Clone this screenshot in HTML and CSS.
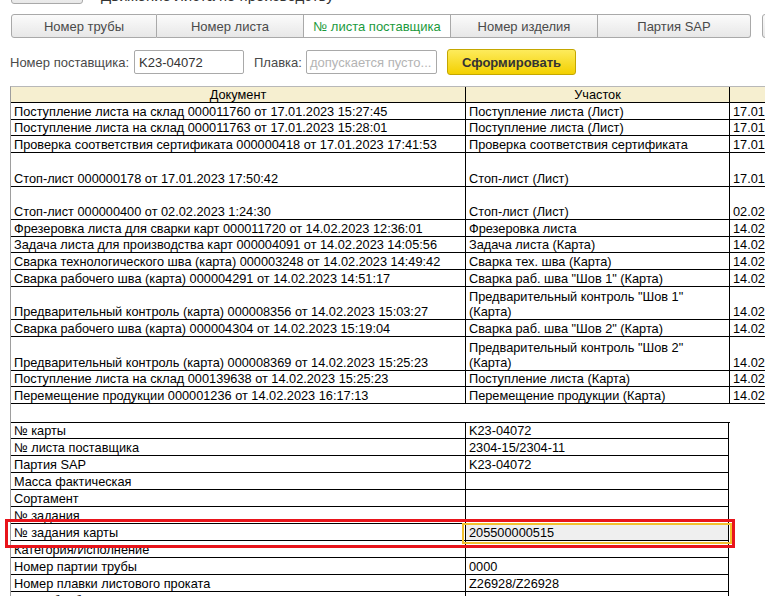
FILE: index.html
```html
<!DOCTYPE html>
<html lang="ru">
<head>
<meta charset="utf-8">
<title>Отчет по карте</title>
<link rel="stylesheet" href="styles.css">
</head>
<body>
<div class="page">
  <div class="topstrip">
    <div class="topstrip-inner">
      <span class="topbtn"></span>
      <span class="toptitle">Движение листа по производству</span>
    </div>
  </div>

  <div class="tabs">
    <div class="tab tab-first">Номер трубы</div>
    <div class="tab">Номер листа</div>
    <div class="tab tab-active">№ листа поставщика</div>
    <div class="tab">Номер изделия</div>
    <div class="tab tab-last">Партия SAP</div>
    <div class="tab tab-extra"></div>
  </div>

  <div class="filters">
    <span class="label label-supplier">Номер поставщика:</span>
    <span class="input input-supplier">K23-04072</span>
    <span class="label label-melt">Плавка:</span>
    <span class="input input-melt placeholder">допускается пусто...</span>
    <span class="btn-primary">Сформировать</span>
  </div>

  <div class="sheet">
    <div class="row head">
      <div class="c c1 center">Документ</div>
      <div class="c c2 center">Участок</div>
      <div class="c c3"></div>
    </div>
    <div class="row"><div class="c c1">Поступление листа на склад 000011760 от 17.01.2023 15:27:45</div><div class="c c2">Поступление листа (Лист)</div><div class="c c3">17.01.2023 15:27:45</div></div>
    <div class="row"><div class="c c1">Поступление листа на склад 000011763 от 17.01.2023 15:28:01</div><div class="c c2">Поступление листа (Лист)</div><div class="c c3">17.01.2023 15:28:01</div></div>
    <div class="row"><div class="c c1">Проверка соответствия сертификата 000000418 от 17.01.2023 17:41:53</div><div class="c c2">Проверка соответствия сертификата</div><div class="c c3">17.01.2023 17:41:53</div></div>
    <div class="row r2"><div class="c c1">Стоп-лист 000000178 от 17.01.2023 17:50:42</div><div class="c c2">Стоп-лист (Лист)</div><div class="c c3">17.01.2023 17:50:42</div></div>
    <div class="row r2"><div class="c c1">Стоп-лист 000000400 от 02.02.2023 1:24:30</div><div class="c c2">Стоп-лист (Лист)</div><div class="c c3">02.02.2023 1:24:30</div></div>
    <div class="row"><div class="c c1">Фрезеровка листа для сварки карт 000011720 от 14.02.2023 12:36:01</div><div class="c c2">Фрезеровка листа</div><div class="c c3">14.02.2023 12:36:01</div></div>
    <div class="row"><div class="c c1">Задача листа для производства карт 000004091 от 14.02.2023 14:05:56</div><div class="c c2">Задача листа (Карта)</div><div class="c c3">14.02.2023 14:05:56</div></div>
    <div class="row"><div class="c c1">Сварка технологического шва (карта) 000003248 от 14.02.2023 14:49:42</div><div class="c c2">Сварка тех. шва (Карта)</div><div class="c c3">14.02.2023 14:49:42</div></div>
    <div class="row"><div class="c c1">Сварка рабочего шва (карта) 000004291 от 14.02.2023 14:51:17</div><div class="c c2">Сварка раб. шва "Шов 1" (Карта)</div><div class="c c3">14.02.2023 14:51:17</div></div>
    <div class="row r2"><div class="c c1">Предварительный контроль (карта) 000008356 от 14.02.2023 15:03:27</div><div class="c c2"><span class="wrap">Предварительный контроль "Шов 1"<br>(Карта)</span></div><div class="c c3">14.02.2023 15:03:27</div></div>
    <div class="row"><div class="c c1">Сварка рабочего шва (карта) 000004304 от 14.02.2023 15:19:04</div><div class="c c2">Сварка раб. шва "Шов 2" (Карта)</div><div class="c c3">14.02.2023 15:19:04</div></div>
    <div class="row r2"><div class="c c1">Предварительный контроль (карта) 000008369 от 14.02.2023 15:25:23</div><div class="c c2"><span class="wrap">Предварительный контроль "Шов 2"<br>(Карта)</span></div><div class="c c3">14.02.2023 15:25:23</div></div>
    <div class="row"><div class="c c1">Поступление листа на склад 000139638 от 14.02.2023 15:25:23</div><div class="c c2">Поступление листа (Карта)</div><div class="c c3">14.02.2023 15:25:23</div></div>
    <div class="row"><div class="c c1">Перемещение продукции 000001236 от 14.02.2023 16:17:13</div><div class="c c2">Перемещение продукции (Карта)</div><div class="c c3">14.02.2023 16:17:13</div></div>

    <div class="row spacer"></div>

    <div class="props">
      <div class="prow"><div class="c c1">№ карты</div><div class="c p2">K23-04072</div></div>
      <div class="prow"><div class="c c1">№ листа поставщика</div><div class="c p2">2304-15/2304-11</div></div>
      <div class="prow"><div class="c c1">Партия SAP</div><div class="c p2">K23-04072</div></div>
      <div class="prow"><div class="c c1">Масса фактическая</div><div class="c p2"></div></div>
      <div class="prow"><div class="c c1">Сортамент</div><div class="c p2"></div></div>
      <div class="prow"><div class="c c1">№ задания</div><div class="c p2"></div></div>
      <div class="prow"><div class="c c1">№ задания карты</div><div class="c p2 selected">205500000515</div></div>
      <div class="prow"><div class="c c1">Категория/Исполнение</div><div class="c p2"></div></div>
      <div class="prow"><div class="c c1">Номер партии трубы</div><div class="c p2">0000</div></div>
      <div class="prow"><div class="c c1">Номер плавки листового проката</div><div class="c p2">Z26928/Z26928</div></div>
      <div class="prow"><div class="c c1">Дата обработки</div><div class="c p2"></div></div>
    </div>
  </div>

  <div class="highlight"></div>
</div>
</body>
</html>
```

FILE: styles.css
```css
html, body {
  margin: 0;
  padding: 0;
  background: #ffffff;
  overflow: hidden;
}

body {
  font-family: "Liberation Sans", Arial, sans-serif;
  font-size: 13px;
  color: #000;
}

.page {
  position: relative;
  width: 765px;
  height: 596px;
  overflow: hidden;
}

/* cut-off top area */
.topstrip {
  height: 4px;
  overflow: hidden;
  display: flex;
  flex-direction: column;
  justify-content: flex-end;
}

.topstrip-inner {
  display: flex;
  align-items: flex-end;
  padding-left: 11px;
}

.topbtn {
  display: block;
  width: 72px;
  height: 22px;
  box-sizing: border-box;
  border: 1px solid #a9a9a9;
  border-radius: 3px;
  background: linear-gradient(#fdfdfd, #e8e8e8);
}

.toptitle {
  margin-left: 18px;
  font-size: 15px;
  line-height: 16px;
  color: #333;
}

/* tabs */
.tabs {
  display: flex;
  margin-top: 10px;
  margin-left: 11px;
  height: 24px;
}

.tab {
  box-sizing: border-box;
  height: 24px;
  width: 147px;
  border: 1px solid #a9a9a9;
  border-left: none;
  background: linear-gradient(#fbfbfb, #e7e7e7);
  color: #4a4a4a;
  display: flex;
  align-items: center;
  justify-content: center;
  line-height: 15px;
  flex-shrink: 0;
}

.tab-first {
  width: 146px;
  border-left: 1px solid #a9a9a9;
  border-radius: 3px 0 0 3px;
}

.tab-last {
  width: 153px;
  border-radius: 0 3px 3px 0;
}

.tab-active {
  background: #ffffff;
  color: #1b9a3c;
}

.tab-extra {
  width: 40px;
  margin-left: 11px;
  border-left: 1px solid #a9a9a9;
  border-radius: 3px;
}

/* filters */
.filters {
  display: flex;
  align-items: center;
  height: 26px;
  margin-top: 11px;
  padding-left: 10px;
  color: #4a4a4a;
}

.label {
  display: inline-block;
  flex-shrink: 0;
  white-space: nowrap;
}

.label-supplier { width: 124px; }
.label-melt { width: 52px; margin-left: 10px; }

.input {
  box-sizing: border-box;
  height: 24px;
  border: 1px solid #a9a9a9;
  border-radius: 2px;
  background: #fff;
  display: flex;
  align-items: center;
  padding-left: 4px;
  color: #333;
  white-space: nowrap;
  overflow: hidden;
  flex-shrink: 0;
}

.input-supplier { width: 110px; }
.input-melt { width: 131px; padding-left: 3px; }

.placeholder { color: #b4b4b4; }

.btn-primary {
  box-sizing: border-box;
  width: 129px;
  height: 26px;
  margin-left: 10px;
  border: 1px solid #c4a700;
  border-radius: 3px;
  background: linear-gradient(#fdeb5c, #f3d000);
  color: #333;
  font-weight: bold;
  display: flex;
  align-items: center;
  justify-content: center;
  flex-shrink: 0;
}

/* spreadsheet */
.sheet {
  margin-top: 11px;
  margin-left: 10px;
  border-left: 1px solid #9e9e9e;
  border-top: 1px solid #b8b8b8;
  height: 600px;
  font-size: 12.75px;
}

.row {
  display: flex;
  height: 16.72px;
}

.r2 { height: 33.44px; }

.c {
  box-sizing: border-box;
  height: 100%;
  border-right: 1px solid #000;
  border-bottom: 1px solid #000;
  padding: 0 3px;
  display: flex;
  align-items: flex-end;
  line-height: 15px;
  white-space: nowrap;
  overflow: hidden;
  flex-shrink: 0;
}

.c1 { width: 455px; }
.c2 { width: 264px; }
.c3 { width: 80px; border-right: none; }

.center { justify-content: center; }

.head {
  height: 16px;
  background: #f6efd0;
}

.wrap {
  display: block;
  white-space: normal;
}

.spacer { height: 17.6px; }

.props {
  border-top: 1px solid #000;
  width: 719px;
}

.prow {
  display: flex;
  height: 16.92px;
}

.p2 { width: 263px; }

.selected {
  position: relative;
  background: #efefef;
  overflow: visible;
}

.selected::after {
  content: "";
  position: absolute;
  left: -4px;
  right: -4px;
  top: -1px;
  bottom: -4px;
  border: 2px solid #f2c12e;
  pointer-events: none;
}

/* red annotation frame */
.highlight {
  position: absolute;
  left: 5px;
  top: 519px;
  width: 730px;
  height: 29px;
  box-sizing: border-box;
  border: 3px solid #e8141b;
  z-index: 5;
}
```
